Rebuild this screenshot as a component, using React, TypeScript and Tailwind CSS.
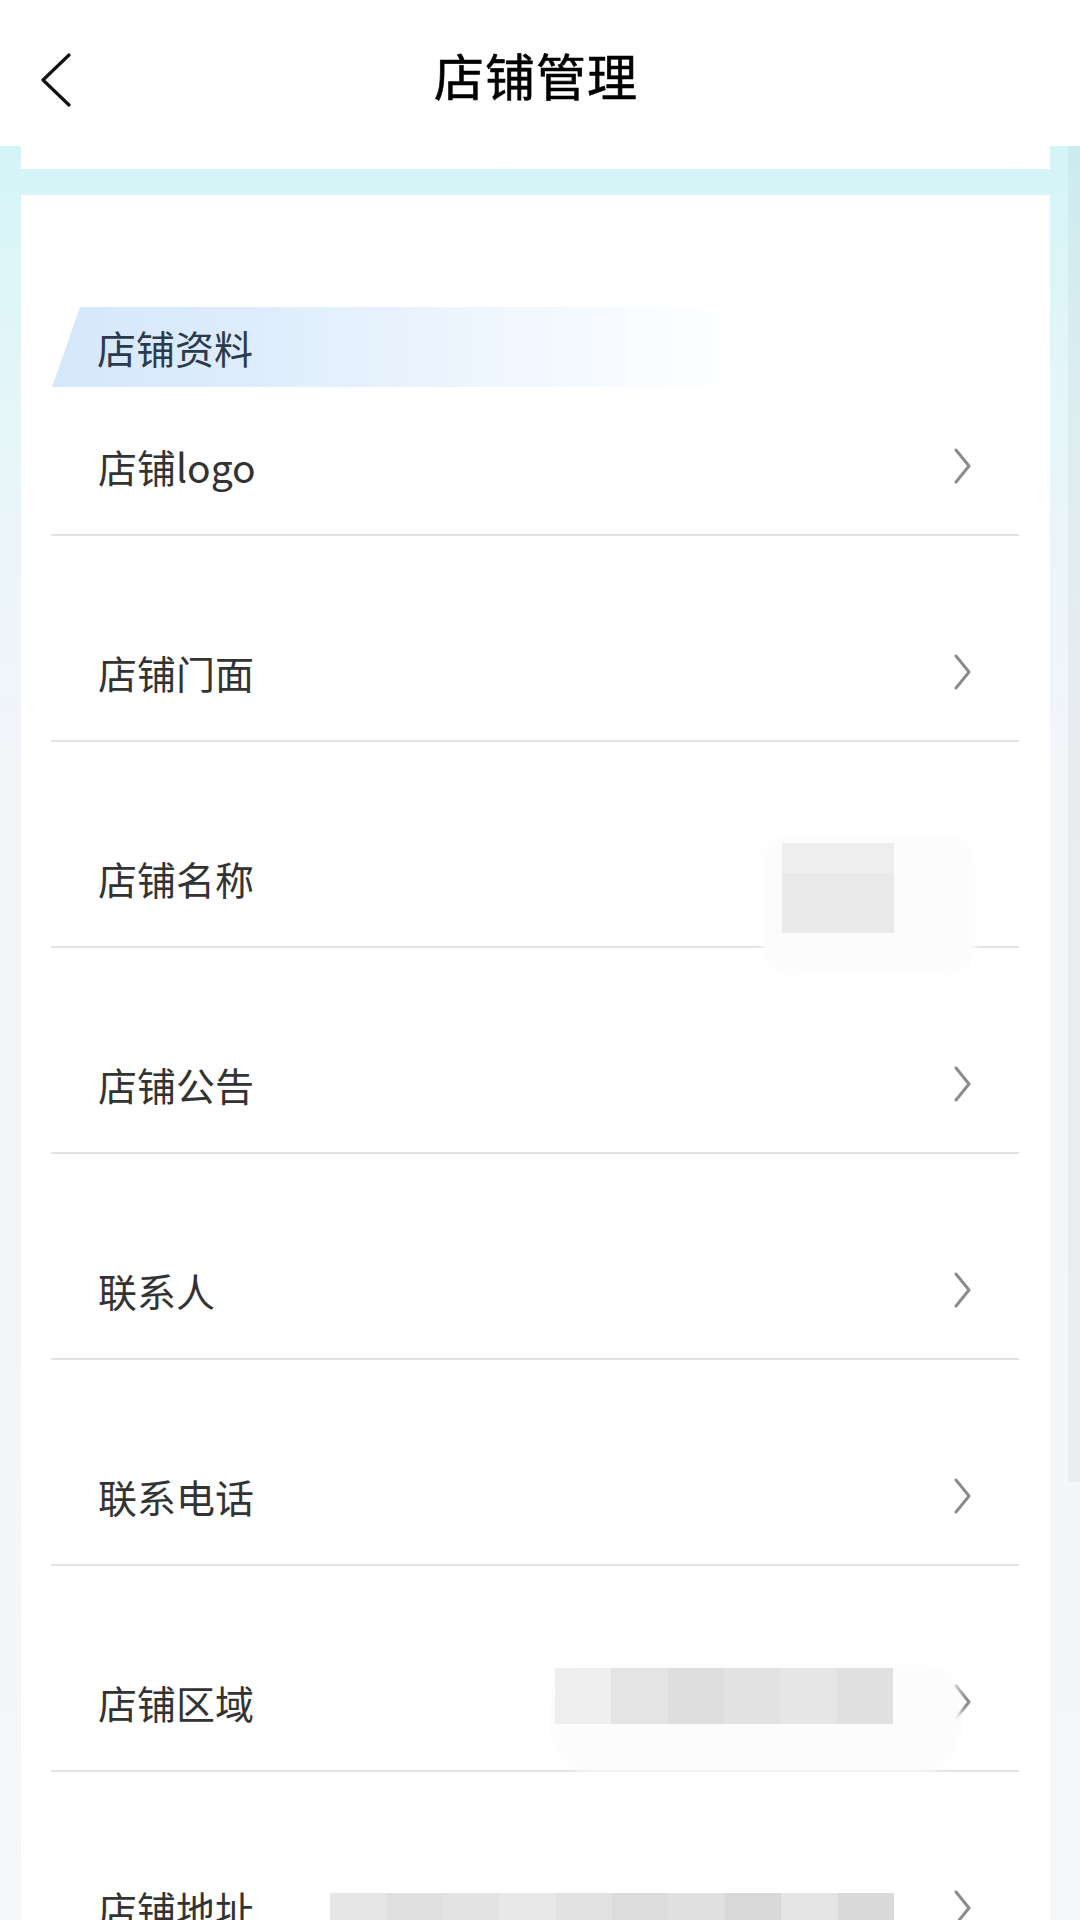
import React from "react";

const Chevron = () => (
  <svg width="18" height="36" viewBox="0 0 18 36" fill="none">
    <path d="M2 2 L15 18 L2 34" stroke="#8c8c8c" strokeWidth="3" strokeLinecap="round" strokeLinejoin="round" />
  </svg>
);

type Row = { label: string; first?: boolean; kind?: "name" | "area" | "addr" };

const rows: Row[] = [
  { label: "店铺logo", first: true },
  { label: "店铺门面" },
  { label: "店铺名称", kind: "name" },
  { label: "店铺公告" },
  { label: "联系人" },
  { label: "联系电话" },
  { label: "店铺区域", kind: "area" },
  { label: "店铺地址", kind: "addr" },
];

function ListRow({ row }: { row: Row }) {
  return (
    <div className="relative">
      <div
        className={`flex items-center justify-between pl-[47px] pr-[47px] ${row.first ? "pt-[55px]" : "pt-[112px]"} pb-[44px]`}
      >
        <span className="text-[39px] leading-[48px] text-[#333333]">{row.label}</span>
        {row.kind === "name" ? <span className="w-[18px] h-[36px]" /> : <Chevron />}
      </div>
      <div className="h-[2px] bg-[#e4e4e4]" />
      {row.kind === "name" && (
        <>
          <div className="absolute left-[711px] top-[93px] w-[214px] h-[140px] bg-[#fcfcfc] rounded-[30px] blur-[3px]" />
          <div className="absolute left-[731px] top-[101px] w-[112px] h-[90px] bg-[#e9e9e9]" />
          <div className="absolute left-[731px] top-[101px] w-[112px] h-[30px] bg-[#eeeeee]" />
        </>
      )}
      {row.kind === "area" && (
        <>
          <div className="absolute left-[500px] top-[98px] w-[410px] h-[108px] bg-[#fcfcfc] rounded-[40px] blur-[3px]" />
          <div className="absolute left-[504px] top-[102px] w-[338px] h-[56px] flex">
            <div className="flex-1 bg-[#efefef]" />
            <div className="flex-1 bg-[#e4e4e4]" />
            <div className="flex-1 bg-[#dedede]" />
            <div className="flex-1 bg-[#e2e2e2]" />
            <div className="flex-1 bg-[#e6e6e6]" />
            <div className="flex-1 bg-[#e0e0e0]" />
          </div>
        </>
      )}
      {row.kind === "addr" && (
        <div className="absolute left-[279px] top-[121px] w-[564px] h-[80px] flex">
          <div className="flex-1 bg-[#e6e6e6]" />
          <div className="flex-1 bg-[#e0e0e0]" />
          <div className="flex-1 bg-[#e3e3e3]" />
          <div className="flex-1 bg-[#e8e8e8]" />
          <div className="flex-1 bg-[#e2e2e2]" />
          <div className="flex-1 bg-[#dcdcdc]" />
          <div className="flex-1 bg-[#e0e0e0]" />
          <div className="flex-1 bg-[#d9d9d9]" />
          <div className="flex-1 bg-[#e4e4e4]" />
          <div className="flex-1 bg-[#dadada]" />
        </div>
      )}
    </div>
  );
}

export default function App() {
  return (
    <div
      className="relative w-[1080px] h-[1920px] overflow-hidden bg-[linear-gradient(180deg,#d4f4f8_146px,#e6f6f9_420px,#f3f5f9_760px,#f4f6fa_1920px)]"
      style={{ fontFamily: '"Noto Sans CJK SC", "Noto Sans", sans-serif' }}
    >
      {/* header */}
      <div className="h-[146px] bg-white grid grid-cols-[1fr_auto_1fr] items-center pt-[2px]">
        <div className="pl-[40px] flex items-center pt-[12px]">
          <svg width="32" height="54" viewBox="0 0 32 54" fill="none">
            <path d="M29 2 L3 27 L29 52" stroke="#111111" strokeWidth="3.2" strokeLinecap="round" strokeLinejoin="round" />
          </svg>
        </div>
        <div className="pr-[8px] text-[50px] leading-[60px] font-normal text-black tracking-[1px] [-webkit-text-stroke:0.6px_#000]">店铺管理</div>
        <div />
      </div>

      {/* body */}
      <div className="pl-[21px] pr-[30px]">
        <div className="h-[23px] bg-white" />
        <div className="mt-[26px] bg-white pt-[112px] pl-[30px] pr-[31px] h-[1800px]">
          <div className="h-[80px] flex items-center pl-[45px] [clip-path:polygon(28px_0,100%_0,100%_100%,0_100%)] bg-[linear-gradient(90deg,#d4e8fb_0%,#deedfc_30%,#ebf4fe_55%,#f7fbff_80%,#ffffff_100%)] w-[700px] ml-[1px]">
            <span className="text-[39px] leading-[48px] text-[#2b3a4c]">店铺资料</span>
          </div>
          {rows.map((r) => (
            <ListRow key={r.label} row={r} />
          ))}
        </div>
      </div>

      {/* scroll indicator */}
      <div className="absolute right-0 top-[146px] w-[12px] h-[1336px] bg-black/[0.035]" />
    </div>
  );
}
